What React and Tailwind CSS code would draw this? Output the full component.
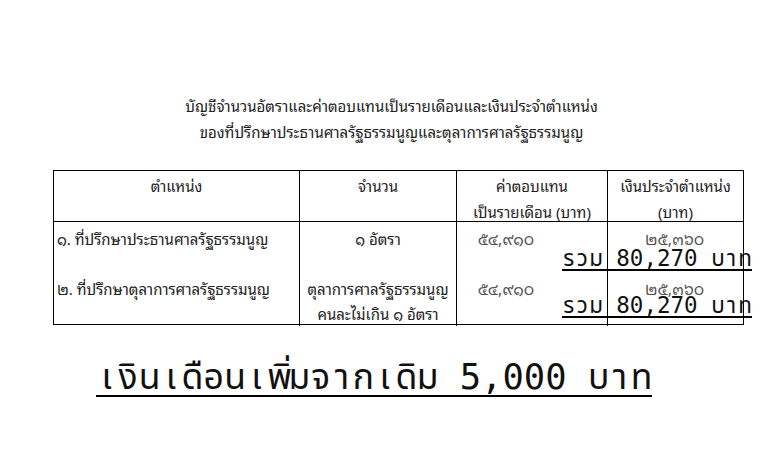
import React from "react";

const thai = { fontFamily: '"Noto Sans Thai Looped", Tahoma, "Noto Sans Thai", "Loma", "Garuda", "DejaVu Sans", sans-serif' };
const mono = { fontFamily: '"DejaVu Sans Mono", "Noto Sans Thai", monospace' };

function MonoLine({ cells, cellClass, className }) {
  return (
    <div className={className} style={mono}>
      {cells.map((c, i) => (
        <div key={i} className={cellClass}>{c === " " ? "\u00a0" : c}</div>
      ))}
    </div>
  );
}

const totalCells = ["ร", "ว", "ม", " ", "8", "0", ",", "2", "7", "0", " ", "บ", "า", "ท"];
const bigCells = [
  "เ", "งิ", "น", "เ", "ดื", "อ", "น", "เ", "พิ่", "ม", "จ", "า", "ก", "เ", "ดิ", "ม",
  " ", "5", ",", "0", "0", "0", " ", "บ", "า", "ท",
];

export default function App() {
  return (
    <div className="relative w-[783px] h-[453px] bg-white text-black overflow-hidden">
      <div className="pt-[92px] flex flex-col items-center text-[15px] leading-[26px] text-[#222]" style={thai}>
        <div>บัญชีจำนวนอัตราและค่าตอบแทนเป็นรายเดือนและเงินประจำตำแหน่ง</div>
        <div>ของที่ปรึกษาประธานศาลรัฐธรรมนูญและตุลาการศาลรัฐธรรมนูญ</div>
      </div>

      <div className="relative ml-[53px] mt-[26px] w-[691px] border border-black text-[15px] text-[#222]" style={thai}>
        <div className="grid grid-cols-[246px_157px_151px_135px] h-[51px] border-b border-black leading-[26px] text-center">
          <div className="border-r border-black pt-[1px]">ตำแหน่ง</div>
          <div className="border-r border-black pt-[1px]">จำนวน</div>
          <div className="border-r border-black pt-[1px]">
            <div>ค่าตอบแทน</div>
            <div>เป็นรายเดือน (บาท)</div>
          </div>
          <div className="pt-[1px]">
            <div>เงินประจำตำแหน่ง</div>
            <div>(บาท)</div>
          </div>
        </div>
        <div className="grid grid-cols-[246px_157px_151px_135px] h-[102px] leading-[25px]">
          <div className="border-r border-black pl-[3px] pt-[4px]">
            <div>๑. ที่ปรึกษาประธานศาลรัฐธรรมนูญ</div>
            <div className="h-[25px]"></div>
            <div>๒. ที่ปรึกษาตุลาการศาลรัฐธรรมนูญ</div>
          </div>
          <div className="border-r border-black pt-[4px] text-center">
            <div>๑ อัตรา</div>
            <div className="h-[25px]"></div>
            <div>ตุลาการศาลรัฐธรรมนูญ</div>
            <div>คนละไม่เกิน ๑ อัตรา</div>
          </div>
          <div className="border-r border-black pt-[4px] text-center text-[16px] text-[#555]">
            <div className="pr-[52px]">๕๔,๙๑๐</div>
            <div className="h-[25px]"></div>
            <div className="pr-[52px]">๕๔,๙๑๐</div>
          </div>
          <div className="pt-[4px] text-center text-[16px] text-[#555]">
            <div className="pr-[2px]">๒๕,๓๖๐</div>
            <div className="h-[25px]"></div>
            <div className="pr-[2px]">๒๕,๓๖๐</div>
          </div>
        </div>

        <MonoLine
          cells={totalCells}
          className="absolute left-[508px] top-[75px] flex items-baseline h-[25px] border-b-2 border-black text-[22.5px] text-[#111]"
          cellClass="w-[13.57px] text-center leading-[25px] whitespace-pre"
        />
        <MonoLine
          cells={totalCells}
          className="absolute left-[508px] top-[122px] flex items-baseline h-[25px] border-b-2 border-black text-[22.5px] text-[#111]"
          cellClass="w-[13.57px] text-center leading-[25px] whitespace-pre"
        />
      </div>

      <MonoLine
        cells={bigCells}
        className="ml-[96px] mt-[32px] flex items-baseline h-[40px] w-fit border-b-2 border-black text-[35.5px] text-[#111]"
        cellClass="w-[21.4px] text-center leading-[40px] whitespace-pre"
      />
    </div>
  );
}
